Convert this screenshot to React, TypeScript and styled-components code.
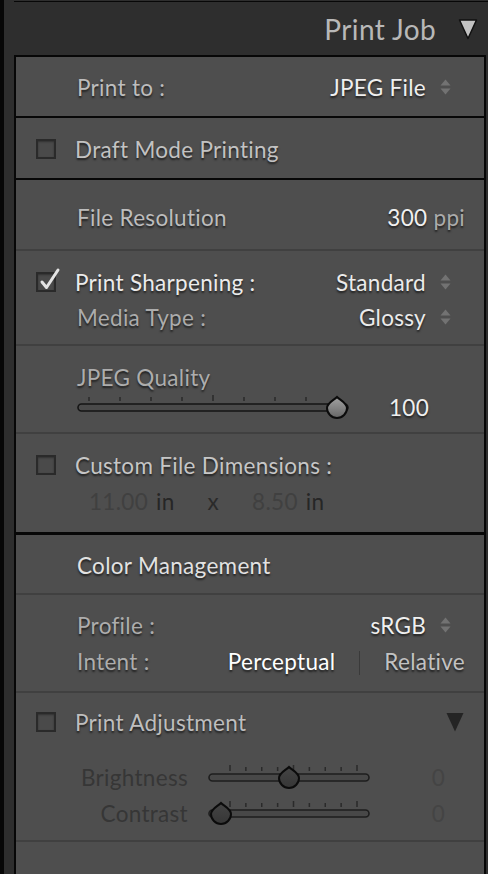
import React from "react";
import styled, { createGlobalStyle } from "styled-components";

const GlobalStyle = createGlobalStyle`
  html, body {
    margin: 0;
    padding: 0;
    background: #070707;
  }
  body {
    font-family: Lato, "Open Sans", sans-serif;
  }
`;

const Frame = styled.div`
  width: 484px;
  height: 874px;
  margin-left: 4px;
  background: #2e2e2e;
  display: flex;
  flex-direction: column;
  overflow: hidden;
`;

const TopRule = styled.div`
  height: 1px;
  margin: 1px 0 1px 10px;
  background: #070707;
`;

const Header = styled.div`
  height: 52px;
  display: flex;
  align-items: center;
  justify-content: flex-end;
  gap: 22px;
  padding-right: 10px;
`;

const HeaderTitle = styled.span`
  font-size: 28px;
  color: #b8b8b8;
  letter-spacing: 0.4px;
`;

const Panel = styled.div`
  flex: 1;
  margin: 0 2px 0 10px;
  border: 2px solid #070707;
  border-bottom: none;
  background: #4e4e4e;
  display: flex;
  flex-direction: column;
`;

type Edge = "heavy" | "thick" | "light" | "none";

const edgeStyle: Record<Edge, string> = {
  heavy: "2px solid #070707",
  thick: "3px solid #070707",
  light: "2px solid #404040",
  none: "none",
};

const Section = styled.section<{ $h: number; $pt: number; $gap?: number; $edge: Edge }>`
  height: ${(p) => p.$h}px;
  box-sizing: border-box;
  padding-top: ${(p) => p.$pt}px;
  display: flex;
  flex-direction: column;
  gap: ${(p) => p.$gap ?? 0}px;
  border-bottom: ${(p) => edgeStyle[p.$edge]};
  flex-shrink: 0;
`;

const Row = styled.div<{ $indent?: number; $top?: number }>`
  height: 30px;
  display: flex;
  align-items: center;
  padding: 0 19px 0 ${(p) => p.$indent ?? 61}px;
  margin-top: ${(p) => p.$top ?? 0}px;
  font-size: 22.5px;
  letter-spacing: 0.3px;
  white-space: nowrap;
`;

const Text = styled.span<{ $c: string; $flat?: boolean }>`
  color: ${(p) => p.$c};
  text-shadow: ${(p) => (p.$flat ? "none" : "0 2px 2px rgba(0, 0, 0, 0.6)")};
`;

const Push = styled.span`
  margin-left: auto;
  display: flex;
  align-items: center;
`;

const SpinnerBox = styled.span`
  display: inline-flex;
  margin: 0 14px 0 14px;
`;

const Box = styled.span`
  position: relative;
  width: 16px;
  height: 16px;
  border: 2px solid #2a2a2a;
  background: #4a4a4a;
  box-shadow: inset 0 1px 2px rgba(0, 0, 0, 0.35);
  margin-right: 19px;
  flex-shrink: 0;
`;

const Tick = styled.svg`
  position: absolute;
  left: 1px;
  top: -7px;
`;

const Divider = styled.span`
  width: 1px;
  height: 24px;
  background: #3a3a3a;
  margin: 4px 24px 0;
`;

const Times = styled(Text)`
  margin: 0 33px;
`;

const Unit = styled(Text)`
  margin-left: 8px;
`;

const SliderLabel = styled(Text)`
  width: 172px;
  text-align: right;
  margin-right: 20px;
`;

const SliderValue = styled(Text)<{ $gap?: number; $end?: number }>`
  margin-left: ${(p) => p.$gap ?? 0}px;
  margin-right: ${(p) => p.$end ?? 0}px;
`;

const Fill = styled.span`
  flex: 1;
`;

function Spinner() {
  return (
    <SpinnerBox>
      <svg width="11" height="16" viewBox="0 0 11 16">
        <polygon points="0.5,6.5 5.5,0.5 10.5,6.5" fill="#727272" />
        <polygon points="0.5,9.5 10.5,9.5 5.5,15.5" fill="#727272" />
      </svg>
    </SpinnerBox>
  );
}

function Checkbox({ checked }: { checked?: boolean }) {
  return (
    <Box>
      {checked && (
        <Tick width="22" height="26" viewBox="0 0 22 26">
          <path
            d="M3 15 L7.5 20.5 L19 3"
            fill="none"
            stroke="#e4e4e4"
            strokeWidth="3"
            strokeLinecap="round"
            strokeLinejoin="round"
          />
        </Tick>
      )}
    </Box>
  );
}

function Caret({ color, stroke }: { color: string; stroke?: string }) {
  return (
    <svg width="20" height="22" viewBox="0 0 20 22">
      <polygon
        points="1.5,2 18.5,2 10,20.5"
        fill={color}
        stroke={stroke ?? "none"}
        strokeWidth="1.5"
        strokeLinejoin="round"
      />
    </svg>
  );
}

type SliderProps = {
  width: number;
  thumb: number;
  ticks: number[];
  tall: number[];
  disabled?: boolean;
};

function Slider({ width, thumb, ticks, tall, disabled }: SliderProps) {
  const id = disabled ? "thumbOff" : "thumbOn";
  const c = thumb;
  return (
    <svg width={width} height="26" viewBox={`0 0 ${width} 26`}>
      <defs>
        <linearGradient id={id} x1="0" y1="0" x2="0" y2="1">
          <stop offset="0" stopColor={disabled ? "#444" : "#a2a2a2"} />
          <stop offset="1" stopColor={disabled ? "#363636" : "#666"} />
        </linearGradient>
      </defs>
      {ticks.map((x, i) => (
        <rect
          key={i}
          x={x - 0.75}
          y={tall.includes(i) ? 1 : 3}
          width="1.5"
          height={tall.includes(i) ? 6 : 4}
          fill="#2a2a2a"
        />
      ))}
      <rect
        x="1"
        y="10"
        width={width - 2}
        height="7"
        rx="3.5"
        fill={disabled ? "#484848" : "#4a4a4a"}
        stroke={disabled ? "#1e1e1e" : "#151515"}
        strokeWidth="1.6"
      />
      <path
        d={`M${c} 3 C${c + 3} 6 ${c + 10} 9 ${c + 10} 14 A10 10 0 1 1 ${c - 10} 14 C${c - 10} 9 ${c - 3} 6 ${c} 3 Z`}
        fill={`url(#${id})`}
        stroke="#0b0b0b"
        strokeWidth="2"
      />
    </svg>
  );
}

const spread = (from: number, to: number, n: number) =>
  Array.from({ length: n }, (_, i) => from + ((to - from) * i) / (n - 1));

export default function App() {
  return (
    <>
      <GlobalStyle />
      <Frame>
        <TopRule />
        <Header>
          <HeaderTitle>Print Job</HeaderTitle>
          <Caret color="#c2c2c2" stroke="#111" />
        </Header>
        <Panel>
          <Section $h={61} $pt={15} $edge="heavy">
            <Row>
              <Text $c="#bdbdbd">Print to :</Text>
              <Push>
                <Text $c="#efefef">JPEG File</Text>
                <Spinner />
              </Push>
            </Row>
          </Section>

          <Section $h={62} $pt={16} $edge="heavy">
            <Row $indent={20}>
              <Checkbox />
              <Text $c="#c2c2c2">Draft Mode Printing</Text>
            </Row>
          </Section>

          <Section $h={71} $pt={22} $edge="light">
            <Row>
              <Text $c="#bdbdbd">File Resolution</Text>
              <Push>
                <Text $c="#f0f0f0">300</Text>
                <Text $c="#ababab">&nbsp;ppi</Text>
              </Push>
            </Row>
          </Section>

          <Section $h={95} $pt={16} $gap={5} $edge="light">
            <Row $indent={20}>
              <Checkbox checked />
              <Text $c="#ebebeb">Print Sharpening :</Text>
              <Push>
                <Text $c="#ebebeb">Standard</Text>
                <Spinner />
              </Push>
            </Row>
            <Row>
              <Text $c="#acacac">Media Type :</Text>
              <Push>
                <Text $c="#ebebeb">Glossy</Text>
                <Spinner />
              </Push>
            </Row>
          </Section>

          <Section $h={88} $pt={16} $edge="light">
            <Row>
              <Text $c="#adadad">JPEG Quality</Text>
            </Row>
            <Row>
              <Slider width={272} thumb={260} ticks={spread(12, 260, 9)} tall={[4]} />
              <SliderValue $c="#efefef" $gap={40}>
                100
              </SliderValue>
            </Row>
          </Section>

          <Section $h={101} $pt={16} $gap={6} $edge="thick">
            <Row $indent={20}>
              <Checkbox />
              <Text $c="#c6c6c6">Custom File Dimensions :</Text>
            </Row>
            <Row $indent={73}>
              <Text $c="#404040" $flat>11.00</Text>
              <Unit $c="#262626" $flat>in</Unit>
              <Times $c="#2a2a2a" $flat>x</Times>
              <Text $c="#404040" $flat>8.50</Text>
              <Unit $c="#262626" $flat>in</Unit>
            </Row>
          </Section>

          <Section $h={60} $pt={15} $edge="light">
            <Row>
              <Text $c="#e2e2e2">Color Management</Text>
            </Row>
          </Section>

          <Section $h={98} $pt={15} $gap={6} $edge="light">
            <Row>
              <Text $c="#adadad">Profile :</Text>
              <Push>
                <Text $c="#efefef">sRGB</Text>
                <Spinner />
              </Push>
            </Row>
            <Row>
              <Text $c="#adadad">Intent :</Text>
              <Push>
                <Text $c="#ffffff">Perceptual</Text>
                <Divider />
                <Text $c="#c2c2c2">Relative</Text>
              </Push>
            </Row>
          </Section>

          <Section $h={149} $pt={14} $edge="light">
            <Row $indent={20}>
              <Checkbox />
              <Text $c="#bebebe">Print Adjustment</Text>
              <Push>
                <Caret color="#242424" />
              </Push>
            </Row>
            <Row $indent={0} $top={25}>
              <SliderLabel $c="#363636" $flat>
                Brightness
              </SliderLabel>
              <Slider width={162} thumb={81} ticks={spread(22, 149, 9)} tall={[0, 4, 8]} disabled />
              <Fill />
              <SliderValue $c="#444444" $flat $end={20}>
                0
              </SliderValue>
            </Row>
            <Row $indent={0} $top={6}>
              <SliderLabel $c="#363636" $flat>
                Contrast
              </SliderLabel>
              <Slider width={162} thumb={13} ticks={spread(22, 149, 9)} tall={[0, 4, 8]} disabled />
              <Fill />
              <SliderValue $c="#444444" $flat $end={20}>
                0
              </SliderValue>
            </Row>
          </Section>
        </Panel>
      </Frame>
    </>
  );
}
